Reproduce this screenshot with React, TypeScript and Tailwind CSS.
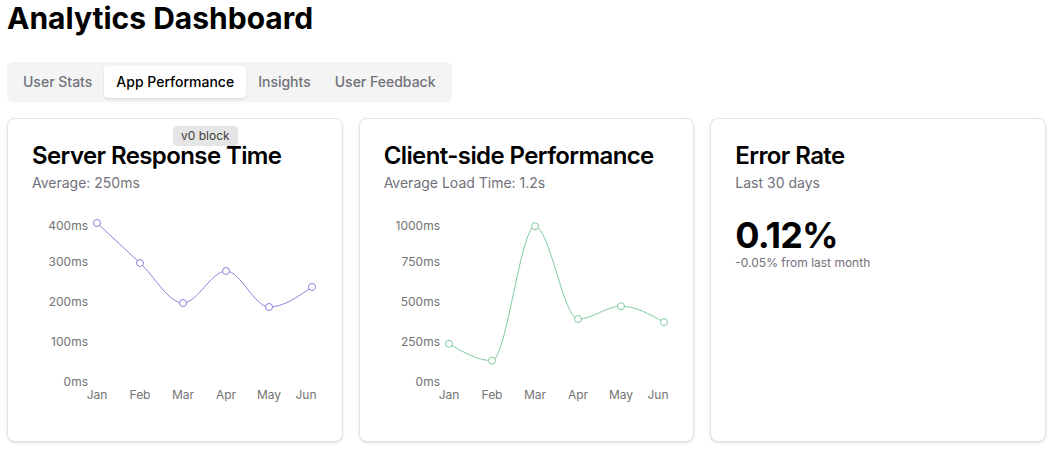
import { useState } from "react";

type Pt = { x: number; y: number };

const months = ["Jan", "Feb", "Mar", "Apr", "May", "Jun"];

// d3-style monotoneX curve
const monotonePath = (pts: Pt[]) => {
  const n = pts.length;
  const sign = (v: number) => (v < 0 ? -1 : 1);
  const t: number[] = new Array(n).fill(0);
  for (let i = 1; i < n - 1; i++) {
    const h0 = pts[i].x - pts[i - 1].x;
    const h1 = pts[i + 1].x - pts[i].x;
    const s0 = (pts[i].y - pts[i - 1].y) / h0;
    const s1 = (pts[i + 1].y - pts[i].y) / h1;
    const p = (s0 * h1 + s1 * h0) / (h0 + h1);
    t[i] = (sign(s0) + sign(s1)) * Math.min(Math.abs(s0), Math.abs(s1), 0.5 * Math.abs(p)) || 0;
  }
  const h = pts[1].x - pts[0].x;
  t[0] = ((3 * (pts[1].y - pts[0].y)) / h - t[1]) / 2;
  const hl = pts[n - 1].x - pts[n - 2].x;
  t[n - 1] = ((3 * (pts[n - 1].y - pts[n - 2].y)) / hl - t[n - 2]) / 2;
  let d = `M${pts[0].x},${pts[0].y}`;
  for (let i = 0; i < n - 1; i++) {
    const dx = (pts[i + 1].x - pts[i].x) / 3;
    d += ` C${pts[i].x + dx},${pts[i].y + dx * t[i]} ${pts[i + 1].x - dx},${pts[i + 1].y - dx * t[i + 1]} ${pts[i + 1].x},${pts[i + 1].y}`;
  }
  return d;
};

const LineChart = ({ data, ticks, color }: { data: number[]; ticks: number[]; color: string }) => {
  const max = ticks[ticks.length - 1];
  const base = 182;
  const span = 160;
  const pts = data.map((v, i) => ({ x: 65 + i * 43, y: base - (v / max) * span }));
  return (
    <svg width="286" height="217" className="block">
      {ticks.map((tk, i) => {
        const y = base - (tk / max) * span + (i === ticks.length - 1 ? 4 : 0);
        return (
          <text key={tk} x={56} y={y} textAnchor="end" dominantBaseline="middle" fontSize="12" fill="#737373">
            {tk}ms
          </text>
        );
      })}
      {months.map((m, i) => (
        <text
          key={m}
          x={i === 5 ? 65 + i * 43 - 6 : 65 + i * 43}
          y={195}
          textAnchor="middle"
          dominantBaseline="middle"
          fontSize="12"
          fill="#737373"
        >
          {m}
        </text>
      ))}
      <path d={monotonePath(pts)} fill="none" stroke={color} strokeWidth="1" />
      {pts.map((p, i) => (
        <circle key={i} cx={p.x} cy={p.y} r="3.5" fill="#fff" stroke={color} strokeWidth="1" />
      ))}
    </svg>
  );
};

const tabs = ["User Stats", "App Performance", "Insights", "User Feedback"];

export default function App() {
  const [tab, setTab] = useState("App Performance");

  return (
    <div className="pl-[7px] bg-white text-black min-h-[473px]" style={{ fontFamily: "Inter, 'Liberation Sans', sans-serif" }}>
      <h1 className="text-3xl font-bold leading-9">Analytics Dashboard</h1>

      <div className="mt-[26px] inline-flex items-center rounded-md bg-[#f4f4f5] p-1 h-10">
        {tabs.map((t) => (
          <button
            key={t}
            onClick={() => setTab(t)}
            className={`h-8 px-3 rounded-sm text-sm font-medium ${
              tab === t ? "bg-white text-black shadow-sm" : "text-[#71717a]"
            }`}
          >
            {t}
          </button>
        ))}
      </div>

      <div className="mt-4 grid grid-cols-3 gap-4 w-[1039px]">
        <div className="relative h-[324px] rounded-lg border border-[#e4e4e7] bg-white shadow-sm">
          <div className="absolute left-[165px] top-[7px] z-10 rounded bg-[#e5e5e5] px-2 py-0.5 text-xs text-[#404040]">
            v0 block
          </div>
          <div className="px-6 pt-[21px]">
            <div className="text-2xl font-semibold tracking-tight leading-8">Server Response Time</div>
            <div className="mt-px text-sm text-[#71717a] leading-5">Average: 250ms</div>
          </div>
          <div className="mt-2 px-6">
            <LineChart data={[400, 300, 200, 280, 190, 240]} ticks={[0, 100, 200, 300, 400]} color="#8884d8" />
          </div>
        </div>

        <div className="h-[324px] rounded-lg border border-[#e4e4e7] bg-white shadow-sm">
          <div className="px-6 pt-[21px]">
            <div className="text-2xl font-semibold tracking-tight leading-8">Client-side Performance</div>
            <div className="mt-px text-sm text-[#71717a] leading-5">Average Load Time: 1.2s</div>
          </div>
          <div className="mt-2 px-6">
            <LineChart data={[245, 140, 980, 400, 480, 380]} ticks={[0, 250, 500, 750, 1000]} color="#82ca9d" />
          </div>
        </div>

        <div className="h-[324px] rounded-lg border border-[#e4e4e7] bg-white shadow-sm">
          <div className="px-6 pt-[21px]">
            <div className="text-2xl font-semibold tracking-tight leading-8">Error Rate</div>
            <div className="mt-px text-sm text-[#71717a] leading-5">Last 30 days</div>
          </div>
          <div className="px-6 mt-[22px]">
            <div className="text-4xl font-bold leading-10 tracking-tight">0.12%</div>
            <div className="text-xs text-[#71717a] leading-4">-0.05% from last month</div>
          </div>
        </div>
      </div>
    </div>
  );
}
